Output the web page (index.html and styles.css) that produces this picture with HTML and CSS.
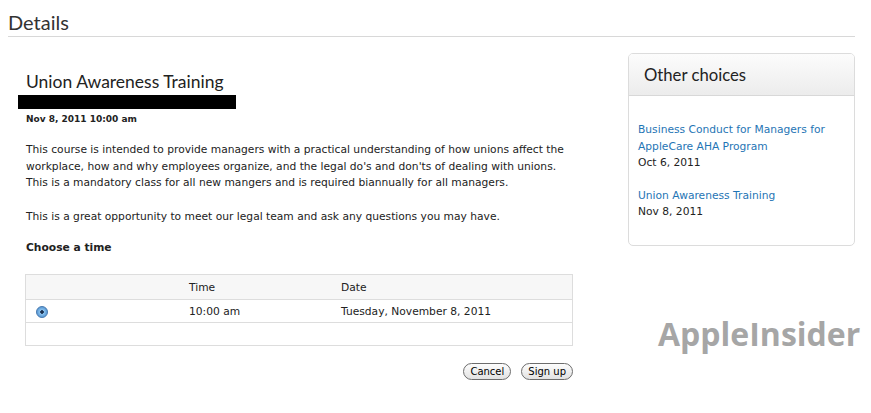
FILE: index.html
```html
<!DOCTYPE html>
<html>
<head>
<meta charset="utf-8">
<link rel="stylesheet" href="styles.css">
</head>
<body>
<div class="page">
  <h1 class="page-title">Details</h1>
  <div class="layout">
    <div class="main">
      <h2 class="course-title">Union Awareness Training</h2>
      <div class="redacted"></div>
      <div class="when">Nov 8, 2011 10:00 am</div>
      <p class="desc">This course is intended to provide managers with a practical understanding of how unions affect the<br>workplace, how and why employees organize, and the legal do's and don'ts of dealing with unions.<br>This is a mandatory class for all new mangers and is required biannually for all managers.</p>
      <p class="desc">This is a great opportunity to meet our legal team and ask any questions you may have.</p>
      <h3 class="choose">Choose a time</h3>
      <table class="times">
        <thead>
          <tr><th class="c-radio"></th><th class="c-time">Time</th><th>Date</th></tr>
        </thead>
        <tbody>
          <tr><td class="c-radio"><span class="radio"></span></td><td>10:00 am</td><td>Tuesday, November 8, 2011</td></tr>
          <tr class="empty"><td></td><td></td><td></td></tr>
        </tbody>
      </table>
      <div class="actions">
        <button class="btn">Cancel</button>
        <button class="btn">Sign up</button>
      </div>
    </div>
    <div class="side">
      <div class="panel">
        <div class="panel-head">Other choices</div>
        <div class="panel-body">
          <div class="choice"><a href="#">Business Conduct for Managers for AppleCare AHA Program</a><div>Oct 6, 2011</div></div>
          <div class="choice"><a href="#">Union Awareness Training</a><div>Nov 8, 2011</div></div>
        </div>
      </div>
      <div class="watermark">AppleInsider</div>
    </div>
  </div>
</div>
</body>
</html>
```
FILE: styles.css
```css
html, body { margin: 0; padding: 0; background: #fff; }
body { font-family: "DejaVu Sans", "Liberation Sans", sans-serif; color: #222; }
.page { padding: 8px 16px 0 8px; }
.page-title {
  margin: 0; font-family: "Lato", sans-serif; font-weight: 400;
  font-size: 20px; line-height: 28px; color: #333;
  border-bottom: 1px solid #d8d8d8;
}
.layout { display: flex; gap: 44px; }
.main { width: 566px; padding: 33px 0 0 10px; }
.course-title {
  margin: 0 0 0 8px; font-family: "Lato", sans-serif; font-weight: 400;
  font-size: 17.5px; line-height: 24px; color: #222;
}
.redacted { background: #000; width: 218px; height: 14px; margin-top: 1px; }
.when { font-size: 9px; font-weight: bold; margin: 5px 0 0 8px; color: #222; }
.desc { font-size: 10.7px; line-height: 16.5px; margin: 18px 0 0 8px; color: #222; white-space: nowrap; }
.desc + .desc { margin-top: 17px; }
.choose { font-size: 10.7px; font-weight: bold; margin: 16px 0 0 8px; color: #222; }
.times {
  margin: 20px 0 0 7px; width: 548px; border-collapse: collapse;
  border: 1px solid #ddd; font-size: 10.7px;
}
.times th { background: #f7f7f7; font-weight: normal; text-align: left; height: 24px; padding: 0; border-bottom: 1px solid #ddd; }
.times td { height: 22px; padding: 0; border-bottom: 1px solid #ddd; }
.c-radio { width: 163px; }
.c-time { width: 152px; }
.radio {
  display: inline-block; width: 10px; height: 10px; border-radius: 50%;
  margin-left: 10px; vertical-align: middle;
  background: radial-gradient(circle, #1a3050 0 1.5px, #8ec4ee 2px, #5a9ad6 5px);
  border: 1px solid #4a7bb0;
}
.actions { display: flex; justify-content: flex-end; gap: 10px; margin: 17px 11px 0 7px; }
.btn {
  font-family: "DejaVu Sans", sans-serif; font-size: 10px; color: #000;
  height: 17px; line-height: 15px; padding: 0 6px; border: 1px solid #6d6d6d; border-radius: 9px;
  background: linear-gradient(#fdfdfd, #e2e2e2);
}
.side { width: 227px; padding-top: 16px; display: flex; flex-direction: column; }
.panel { border: 1px solid #dcdcdc; border-radius: 5px; overflow: hidden; }
.panel-head {
  height: 41px; line-height: 43px; padding-left: 15px;
  font-family: "Lato", sans-serif; font-size: 16.7px; color: #222;
  background: linear-gradient(#fcfcfc, #ececec); border-bottom: 1px solid #d8d8d8;
}
.panel-body { padding: 26px 10px 24px 9px; font-size: 10.7px; line-height: 16.5px; }
.choice + .choice { margin-top: 16px; }
.choice a { color: #1f75b5; text-decoration: none; }
.choice div { color: #222; }
.watermark {
  margin: 66px 0 0 30px; font-family: "Open Sans", sans-serif; font-weight: 700;
  font-size: 32px; color: #a6a6a6; letter-spacing: 0;
}
```
